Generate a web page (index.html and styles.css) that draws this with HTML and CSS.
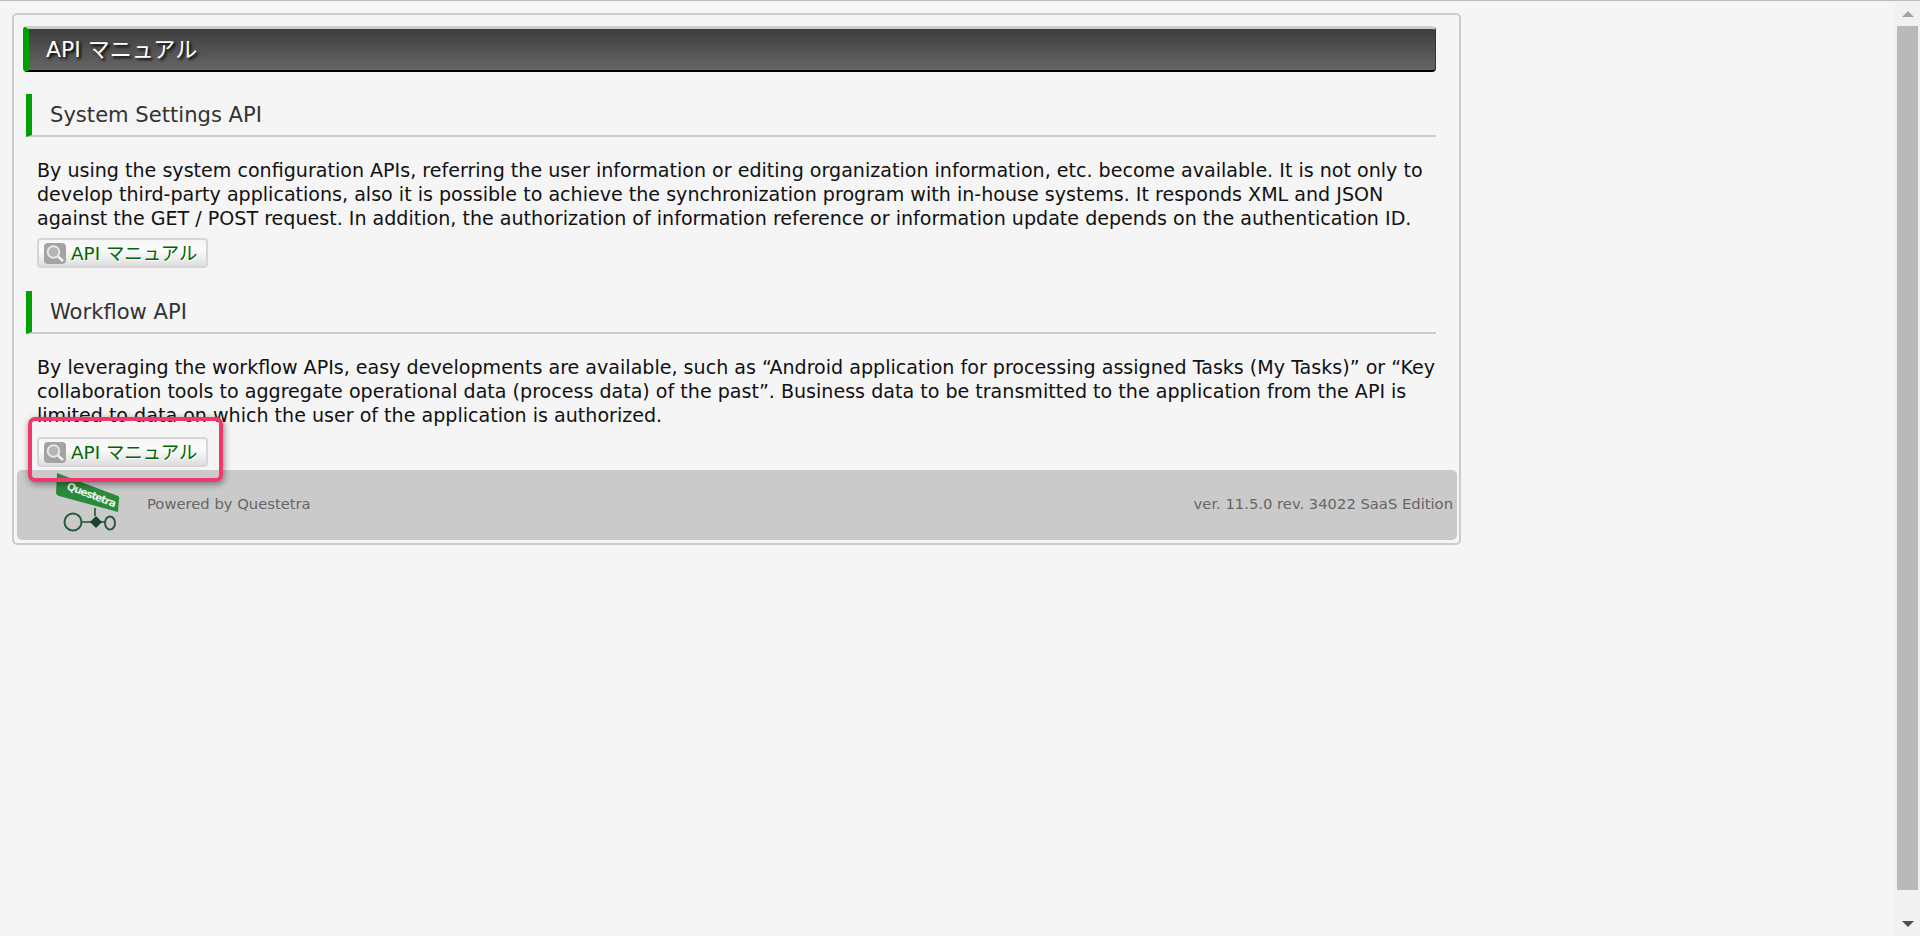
FILE: index.html
```html
<!DOCTYPE html>
<html lang="ja">
<head>
    <meta charset="UTF-8" />
    <title>API マニュアル</title>
    <link rel="stylesheet" href="styles.css">
</head>
<body>
    <main class="page">
        <div class="panel">
            <h1 class="title">API マニュアル</h1>

            <h2 class="section-head">System Settings API</h2>
            <p class="section-text">By using the system configuration APIs, referring the user information or editing organization information, etc. become available. It is not only to develop third-party applications, also it is possible to achieve the synchronization program with in-house systems. It responds XML and JSON against the GET / POST request. In addition, the authorization of information reference or information update depends on the authentication ID.</p>
            <a class="manual-btn" href="#">
                <svg class="manual-icon" viewBox="0 0 22 21"><rect width="22" height="21" rx="4" fill="#a3a3a3"/><circle cx="9.5" cy="9" r="5.8" fill="#b5b5b5" stroke="#e8e8e8" stroke-width="2"/><path d="M14 13.5l5 4.5" stroke="#f2f2f2" stroke-width="2.4"/></svg>
                <span>API マニュアル</span>
            </a>

            <h2 class="section-head">Workflow API</h2>
            <p class="section-text">By leveraging the workflow APIs, easy developments are available, such as “Android application for processing assigned Tasks (My Tasks)” or “Key collaboration tools to aggregate operational data (process data) of the past”. Business data to be transmitted to the application from the API is limited to data on which the user of the application is authorized.</p>
            <a class="manual-btn manual-btn-last" href="#">
                <svg class="manual-icon" viewBox="0 0 22 21"><rect width="22" height="21" rx="4" fill="#a3a3a3"/><circle cx="9.5" cy="9" r="5.8" fill="#b5b5b5" stroke="#e8e8e8" stroke-width="2"/><path d="M14 13.5l5 4.5" stroke="#f2f2f2" stroke-width="2.4"/></svg>
                <span>API マニュアル</span>
            </a>

            <footer class="footer">
                <svg class="logo" viewBox="0 0 68 60">
                    <path d="M4 1L65 24q2 1 1 3l-1 13L6 24q-3-1-3-3z" fill="#2a8a3a"/>
                    <text class="logo-text" x="13" y="17" textLength="52" transform="rotate(21 13 17)">Questetra</text>
                    <path d="M42 36v8M28 50h10M48 50h4" stroke="#1f4d2c" stroke-width="1.5"/>
                    <circle cx="20" cy="50" r="8.5" fill="none" stroke="#2a5a3f" stroke-width="2"/>
                    <path d="M43 44l6 6-6 6-6-6z" fill="#17452a"/>
                    <ellipse cx="57" cy="51" rx="5" ry="6.5" fill="none" stroke="#2a5a3f" stroke-width="2"/>
                </svg>
                <span class="powered">Powered by Questetra</span>
                <span class="version">ver. 11.5.0 rev. 34022 SaaS Edition</span>
            </footer>

            <div class="highlight"></div>
        </div>
    </main>

    <div class="scrollbar">
        <div class="scroll-arrow"><span class="arrow-up"></span></div>
        <div class="scroll-track"><div class="scroll-thumb"></div></div>
        <div class="scroll-arrow"><span class="arrow-down"></span></div>
    </div>
</body>
</html>
```

FILE: styles.css
```css
* {
    margin: 0;
    padding: 0;
    box-sizing: border-box;
}

html, body {
    height: 100%;
    overflow: hidden;
}

body {
    display: flex;
    background: #f5f5f5;
    border-top: 1px solid #bbb;
    color: #111;
    font-family: "DejaVu Sans", "Noto Sans CJK JP", sans-serif;
}

.page {
    flex: 1;
    padding: 12px 0 0 12px;
}

.panel {
    position: relative;
    width: 1449px;
    height: 532px;
    padding: 11px 2px 0 3px;
    border: 2px solid #ccc;
    border-radius: 5px;
}

.title {
    height: 46px;
    margin: 0 21px 0 6px;
    padding-left: 17px;
    border-top: 3px solid #ccc;
    border-bottom: 2px solid #000;
    border-left: 6px solid #00a000;
    border-right: 1px solid #333;
    border-radius: 4px;
    background: linear-gradient(#3d3d3d, #666);
    color: #fff;
    font-size: 22px;
    font-weight: normal;
    line-height: 41px;
    text-shadow: 2px 2px 3px #000;
}

.section-head {
    height: 43px;
    margin: 23px 21px 0 9px;
    padding-left: 18px;
    border-left: 6px solid #00a000;
    border-bottom: 2px solid #ccc;
    color: #333;
    font-size: 21.1px;
    font-weight: normal;
    line-height: 41px;
}

.title + .section-head {
    margin-top: 22px;
}

.section-text {
    margin: 21px 21px 0 20px;
    font-size: 19.08px;
    line-height: 24px;
}

.manual-btn {
    display: flex;
    align-items: center;
    gap: 5px;
    width: 171px;
    height: 30px;
    margin: 8px 0 0 20px;
    padding: 0 0 2px 5px;
    border: 2px solid #d6d6d6;
    border-radius: 4px;
    background: linear-gradient(#f6f6f6, #fbfbfb 40%, #dedede);
    color: #006400;
    font-size: 18.4px;
    text-decoration: none;
    text-shadow: 1px 1px 0 #fff;
}

.manual-btn-last {
    margin-top: 10px;
}

.manual-icon {
    width: 22px;
    height: 21px;
    margin-top: 2px;
}

.footer {
    display: flex;
    align-items: center;
    height: 70px;
    margin-top: 3px;
    padding: 0 4px 0 36px;
    background: #cacaca;
    border-radius: 5px;
    color: #666;
    font-size: 14.75px;
}

.logo {
    align-self: flex-start;
    width: 68px;
    height: 60px;
    margin-top: 2px;
}

.logo-text {
    fill: #e8f5ea;
    font-family: "DejaVu Sans", sans-serif;
    font-size: 10.5px;
    font-weight: bold;
}

.powered {
    margin-left: 26px;
    margin-top: -4px;
}

.version {
    margin-left: auto;
    margin-top: -4px;
}

/* marker drawn over the second button */
.highlight {
    position: absolute;
    left: 14px;
    top: 402px;
    width: 195px;
    height: 65px;
    border: 4px solid #f0386b;
    border-radius: 7px;
    box-shadow: 1px 2px 7px rgba(0, 0, 0, 0.45);
}

.scrollbar {
    display: flex;
    flex-direction: column;
    width: 25px;
    background: #f1f1f1;
}

.scroll-arrow {
    display: flex;
    justify-content: center;
    align-items: center;
    height: 25px;
}

.arrow-up {
    border: 6px solid transparent;
    border-top: 0;
    border-bottom: 6px solid #a3a3a3;
}

.arrow-down {
    border: 6px solid transparent;
    border-bottom: 0;
    border-top: 6px solid #505050;
}

.scroll-track {
    flex: 1;
    padding: 0 2px;
}

.scroll-thumb {
    height: 864px;
    background: #b9b9b9;
}
```
